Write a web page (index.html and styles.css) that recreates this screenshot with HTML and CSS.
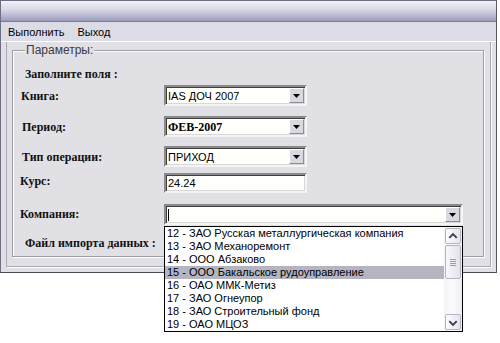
FILE: index.html
```html
<!DOCTYPE html>
<html lang="ru">
<head>
<meta charset="utf-8">
<title>Параметры</title>
<link rel="stylesheet" href="styles.css">
</head>
<body>
<div class="window">
  <div class="titlebar"></div>
  <div class="menubar">
    <span class="menu-item">Выполнить</span>
    <span class="menu-item">Выход</span>
  </div>
  <div class="client">
    <div class="panel">
      <fieldset class="group">
        <legend class="group-title">Параметры:</legend>
        <div class="form">
          <div class="row row-title"><span class="label l-title">Заполните поля :</span></div>

          <div class="row row-book">
            <span class="label l-book">Книга:</span>
            <div class="combo">
              <span class="value">IAS ДОЧ 2007</span>
              <span class="drop-btn"><svg width="9" height="5" viewBox="0 0 9 5"><polygon points="1,0 8,0 4.5,4" fill="#000"/></svg></span>
            </div>
          </div>

          <div class="row row-period">
            <span class="label l-period">Период:</span>
            <div class="combo">
              <span class="value value-serif">ФЕВ-2007</span>
              <span class="drop-btn"><svg width="9" height="5" viewBox="0 0 9 5"><polygon points="1,0 8,0 4.5,4" fill="#000"/></svg></span>
            </div>
          </div>

          <div class="row row-type">
            <span class="label l-type">Тип операции:</span>
            <div class="combo">
              <span class="value">ПРИХОД</span>
              <span class="drop-btn"><svg width="9" height="5" viewBox="0 0 9 5"><polygon points="1,0 8,0 4.5,4" fill="#000"/></svg></span>
            </div>
          </div>

          <div class="row row-rate">
            <span class="label l-rate">Курс:</span>
            <div class="combo combo-text">
              <span class="value">24.24</span>
            </div>
          </div>

          <div class="row row-company">
            <span class="label l-company">Компания:</span>
            <div class="combo combo-wide">
              <span class="caret"></span>
              <span class="drop-btn"><svg width="9" height="5" viewBox="0 0 9 5"><polygon points="1,0 8,0 4.5,4" fill="#000"/></svg></span>
              <div class="dropdown">
                <ul class="options">
                  <li>12 - ЗАО Русская металлургическая компания</li>
                  <li>13 - ЗАО Механоремонт</li>
                  <li>14 - ООО Абзаково</li>
                  <li class="selected">15 - ООО Бакальское рудоуправление</li>
                  <li>16 - ОАО ММК-Метиз</li>
                  <li>17 - ЗАО Огнеупор</li>
                  <li>18 - ЗАО Строительный фонд</li>
                  <li>19 - ОАО МЦОЗ</li>
                </ul>
                <div class="scrollbar">
                  <span class="sb-btn"><svg width="15" height="15" viewBox="0 0 15 15"><polyline points="3.5,9 7.5,5 11.5,9" fill="none" stroke="#3d3d55" stroke-width="2"/></svg></span>
                  <div class="sb-track">
                    <span class="sb-thumb"><span class="grip"></span><span class="grip"></span><span class="grip"></span><span class="grip"></span></span>
                  </div>
                  <span class="sb-btn"><svg width="15" height="15" viewBox="0 0 15 15"><polyline points="3.5,6 7.5,10 11.5,6" fill="none" stroke="#3d3d55" stroke-width="2"/></svg></span>
                </div>
              </div>
            </div>
          </div>

          <div class="row row-file"><span class="label l-file">Файл импорта данных :</span></div>
        </div>
      </fieldset>
    </div>
  </div>
</div>
</body>
</html>
```

FILE: styles.css
```css
html, body {
  margin: 0;
  padding: 0;
  background: #ffffff;
}

body {
  width: 500px;
  height: 343px;
  overflow: hidden;
  font-family: "Liberation Sans", Arial, sans-serif;
  font-size: 11px;
  color: #000;
}

.window {
  width: 495px;
  height: 271px;
  border: 1px solid #6e6e80;
  border-right-color: #5a5a66;
  border-bottom-color: #4a4a55;
  background: #e0e0e5;
  display: flex;
  flex-direction: column;
}

.titlebar {
  height: 20px;
  background: linear-gradient(to bottom, #f2f2f8 0%, #d6d6e6 45%, #9c9cbc 100%);
  border-bottom: 1px solid #7c7c94;
}

.menubar {
  height: 19px;
  background: #dcdce7;
  border-bottom: 1px solid #ffffff;
  display: flex;
  align-items: center;
  gap: 13px;
  padding-left: 7px;
}

.menu-item {
  color: #000;
  line-height: 14px;
  padding-top: 1px;
}

.client {
  flex: 1;
  display: flex;
  flex-direction: column;
}

.panel {
  flex: 1;
  margin: 0 5px 5px 5px;
  border: 1px solid #a8a8b2;
  border-top: none;
  box-shadow: 1px 1px 0 #ffffff;
  display: flex;
  flex-direction: column;
}

.group {
  margin: 1px 6px 0 5px;
  padding: 0 0 5px 7px;
  border: 1px solid #9d9da6;
  box-shadow: inset 1px 1px 0 #ffffff, 1px 1px 0 #ffffff;
  min-width: 0;
}

.group-title {
  margin-left: 5px;
  padding: 0 1px;
  font-size: 12px;
  line-height: 14px;
  color: #3a3a44;
  background: #e0e0e5;
}

.form {
  display: flex;
  flex-direction: column;
}

.row {
  display: flex;
  align-items: center;
}

.label {
  width: 144px;
  flex: none;
  font-family: "Liberation Serif", "Times New Roman", serif;
  font-weight: bold;
  font-size: 12px;
  line-height: 16px;
  color: #111;
}

.row-title { margin-top: 9px; height: 16px; }
.row-book { margin-top: 3px; }
.row-period { margin-top: 10px; }
.row-type { margin-top: 9px; }
.row-rate { margin-top: 6px; align-items: flex-start; }
.row-company { margin-top: 11px; }
.row-file { margin-top: 10px; height: 16px; }

.l-title { padding-left: 5px; width: auto; }
.l-book { padding-left: 1px; width: 143px; }
.l-period { padding-left: 2px; width: 142px; }
.l-type { padding-left: 2px; width: 142px; }
.l-rate { padding-left: 0; margin-top: 0; }
.l-company { padding-left: 0; margin-top: -2px; }
.l-file { padding-left: 5px; width: auto; }

.combo {
  position: relative;
  width: 139px;
  height: 17px;
  background: #fffffb;
  border: 2px solid;
  border-color: #8a8a8a #f4f4f4 #f4f4f4 #8a8a8a;
  box-shadow: inset 1px 1px 0 #404040, inset -1px -1px 0 #d8d8dc;
  display: flex;
  align-items: center;
}

.combo-text {
  height: 16px;
}

.combo-wide {
  width: 295px;
}

.value {
  padding-left: 2px;
  line-height: 14px;
  white-space: nowrap;
  flex: 1;
}

.value-serif {
  font-family: "Liberation Serif", "Times New Roman", serif;
  font-weight: bold;
  font-size: 12px;
}

.caret {
  margin-left: 2px;
  width: 1px;
  height: 12px;
  background: #000;
  flex: 1 0 1px;
  max-width: 1px;
}

.drop-btn {
  margin-left: auto;
  margin-right: 1px;
  width: 15px;
  height: 15px;
  flex: none;
  background: #d9d9e1;
  border: 1px solid;
  border-color: #ffffff #8c8c98 #8c8c98 #ffffff;
  box-sizing: border-box;
  display: flex;
  align-items: center;
  justify-content: center;
}

.drop-btn svg {
  display: block;
  margin-top: 1px;
}

.dropdown {
  position: absolute;
  left: -2px;
  top: calc(100% + 3px);
  width: 297px;
  height: 104px;
  border: 1px solid #000;
  background: #ffffff;
  display: flex;
  z-index: 5;
}

.options {
  list-style: none;
  margin: 0;
  padding: 0;
  flex: 1;
}

.options li {
  height: 13px;
  line-height: 13px;
  padding-left: 2px;
  white-space: nowrap;
  color: #000;
}

.options li.selected {
  background: #b5b5c2;
}

.scrollbar {
  width: 18px;
  flex: none;
  display: flex;
  flex-direction: column;
  background: linear-gradient(to right, #f3f3f7, #fbfbfd 50%, #eeeef3);
}

.sb-btn {
  margin: 1px 1px 0 1px;
  width: 16px;
  height: 16px;
  box-sizing: border-box;
  border: 1px solid #b4b4c4;
  border-radius: 2px;
  background: linear-gradient(to right, #fdfdfe, #e4e4ec);
  display: flex;
  align-items: center;
  justify-content: center;
}

.sb-btn:last-child {
  margin: 0 1px 1px 1px;
}

.sb-track {
  flex: 1;
  padding: 1px 1px;
  display: flex;
  flex-direction: column;
}

.sb-thumb {
  height: 34px;
  box-sizing: border-box;
  border: 1px solid #b4b4c4;
  border-radius: 2px;
  background: linear-gradient(to right, #f8f8fb, #e2e2ea);
  display: flex;
  flex-direction: column;
  align-items: center;
  justify-content: center;
  gap: 1px;
}

.grip {
  width: 6px;
  height: 1px;
  background: #9c9cae;
}
```
